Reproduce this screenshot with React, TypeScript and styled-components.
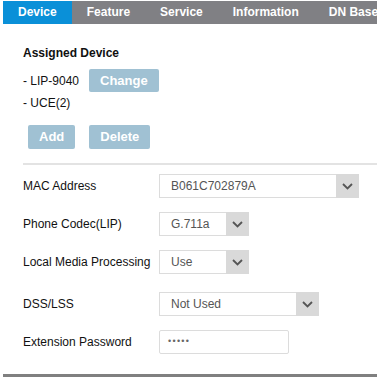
import React from "react";
import styled, { createGlobalStyle } from "styled-components";

const Global = createGlobalStyle`
  html, body { margin: 0; padding: 0; background: #fff; overflow: hidden; }
  body { font-family: Arial, "Liberation Sans", sans-serif; }
`;

const Page = styled.div`
  margin: 1px 0 0 3px;
  width: 374px;
  overflow: hidden;
`;

const TabBar = styled.div`
  display: flex;
  height: 23px;
  background: #808084;
  overflow: hidden;
`;

const Tab = styled.div<{ $active?: boolean }>`
  flex-shrink: 0;
  padding: 0 15px;
  line-height: 23px;
  font-size: 12px;
  font-weight: bold;
  color: #fff;
  white-space: nowrap;
  background: ${(p) => (p.$active ? "#0a90d8" : "transparent")};
`;

const Content = styled.div`
  padding: 22px 0 0 20px;
  display: flex;
  flex-direction: column;
`;

const Title = styled.div`
  font-size: 12px;
  font-weight: bold;
  line-height: 14px;
  color: #111;
`;

const DeviceRow = styled.div<{ $mt: number }>`
  display: flex;
  align-items: center;
  margin-top: ${(p) => p.$mt}px;
  min-height: 14px;
`;

const DeviceName = styled.span`
  font-size: 12px;
  line-height: 14px;
  color: #111;
  width: 66px;
`;

const Button = styled.button`
  height: 23px;
  padding: 0 11px;
  border: none;
  border-radius: 2px;
  background: #a0c1d3;
  color: #fff;
  font-family: Arial, "Liberation Sans", sans-serif;
  font-size: 13px;
  font-weight: bold;
  line-height: 23px;
`;

const ButtonRow = styled.div`
  display: flex;
  gap: 14px;
  margin-top: 15px;
  padding-left: 5px;
  height: 24px;
  & > button { height: 24px; line-height: 24px; }
`;

const Divider = styled.div`
  margin-top: 14px;
  height: 2px;
  background: #e3e3e3;
`;

const Form = styled.div`
  display: flex;
  flex-direction: column;
  margin-top: 9px;
`;

const FieldRow = styled.div<{ $mt: number }>`
  display: flex;
  align-items: center;
  height: 24px;
  margin-top: ${(p) => p.$mt}px;
`;

const Label = styled.div`
  width: 136px;
  font-size: 12px;
  color: #111;
  white-space: nowrap;
`;

const SelectBox = styled.div<{ $w: number }>`
  display: flex;
  box-sizing: border-box;
  width: ${(p) => p.$w}px;
  height: 24px;
  border: 1px solid #dcdcdc;
  border-right: none;
`;

const SelectValue = styled.div`
  flex: 1;
  padding-left: 11px;
  font-size: 12px;
  line-height: 22px;
  color: #555;
`;

const Arrow = styled.div`
  width: 23px;
  margin-top: -1px;
  height: 24px;
  background: #d9d9d9;
  display: flex;
  align-items: center;
  justify-content: center;
`;

const TextBox = styled.div`
  box-sizing: border-box;
  width: 130px;
  height: 24px;
  border: 1px solid #dcdcdc;
  border-radius: 2px;
  padding-left: 8px;
  font-size: 9px;
  letter-spacing: 1.3px;
  line-height: 21px;
  color: #666;
`;

const BottomBar = styled.div`
  margin-top: 20px;
  height: 3px;
  background: #808080;
`;

const Chevron = () => (
  <svg width="11" height="7" viewBox="0 0 11 7">
    <polyline points="1,1 5.5,5.5 10,1" fill="none" stroke="#555" strokeWidth="1.8" />
  </svg>
);

const Select = ({ w, value }: { w: number; value: string }) => (
  <SelectBox $w={w}>
    <SelectValue>{value}</SelectValue>
    <Arrow>
      <Chevron />
    </Arrow>
  </SelectBox>
);

export default function App() {
  return (
    <>
      <Global />
      <Page>
        <TabBar>
          <Tab $active>Device</Tab>
          <Tab>Feature</Tab>
          <Tab>Service</Tab>
          <Tab>Information</Tab>
          <Tab>DN Base</Tab>
        </TabBar>
        <Content>
          <Title>Assigned Device</Title>
          <DeviceRow $mt={9}>
            <DeviceName>- LIP-9040</DeviceName>
            <Button>Change</Button>
          </DeviceRow>
          <DeviceRow $mt={4}>
            <DeviceName>- UCE(2)</DeviceName>
          </DeviceRow>
          <ButtonRow>
            <Button>Add</Button>
            <Button>Delete</Button>
          </ButtonRow>
          <Divider />
          <Form>
            <FieldRow $mt={0}>
              <Label>MAC Address</Label>
              <Select w={200} value="B061C702879A" />
            </FieldRow>
            <FieldRow $mt={14}>
              <Label>Phone Codec(LIP)</Label>
              <Select w={90} value="G.711a" />
            </FieldRow>
            <FieldRow $mt={14}>
              <Label>Local Media Processing</Label>
              <Select w={90} value="Use" />
            </FieldRow>
            <FieldRow $mt={18}>
              <Label>DSS/LSS</Label>
              <Select w={160} value="Not Used" />
            </FieldRow>
            <FieldRow $mt={14}>
              <Label>Extension Password</Label>
              <TextBox>•••••</TextBox>
            </FieldRow>
          </Form>
        </Content>
        <BottomBar />
      </Page>
    </>
  );
}
